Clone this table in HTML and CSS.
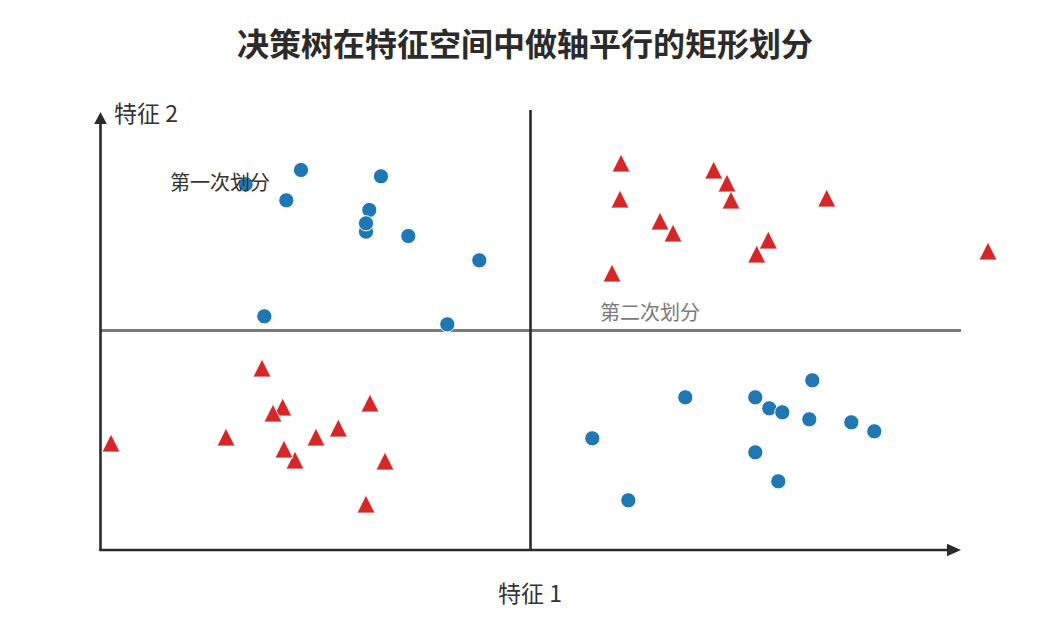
FILE: index.html
```html
<!DOCTYPE html>
<html lang="zh">
<head>
<meta charset="utf-8">
<title>决策树在特征空间中做轴平行的矩形划分</title>
<link rel="stylesheet" href="styles.css">
</head>
<body>
<div class="page">
  <h1 class="title">决策树在特征空间中做轴平行的矩形划分</h1>
  <svg class="chart" width="1050" height="640" viewBox="0 0 1050 640" xmlns="http://www.w3.org/2000/svg">
    <!-- split lines -->
    <line class="split-h" x1="100" y1="330.5" x2="961" y2="330.5"/>
    <line class="split-v" x1="530.5" y1="110" x2="530.5" y2="550"/>
    <!-- axes -->
    <line class="axis" x1="100.5" y1="551" x2="100.5" y2="120"/>
    <polygon class="axis-head" points="100.5,112 94.2,124 106.8,124"/>
    <line class="axis" x1="99.3" y1="550" x2="950" y2="550"/>
    <polygon class="axis-head" points="961,550 947,543.7 947,556.3"/>

    <!-- blue circles -->
    <g class="dots">
      <circle cx="301" cy="170" r="7.6"/>
      <circle cx="381" cy="176.3" r="7.6"/>
      <circle cx="245.7" cy="184.3" r="7.6"/>
      <circle cx="286.3" cy="200.3" r="7.6"/>
      <circle cx="366" cy="231.7" r="7.6"/>
      <circle cx="369.3" cy="210" r="7.6"/>
      <circle cx="366" cy="223.3" r="7.6"/>
      <circle cx="408.3" cy="236" r="7.6"/>
      <circle cx="479.3" cy="260.3" r="7.6"/>
      <circle cx="264.3" cy="316.3" r="7.6"/>
      <circle cx="447.3" cy="324.3" r="7.6"/>

      <circle cx="592.3" cy="438.3" r="7.6"/>
      <circle cx="628.3" cy="500.3" r="7.6"/>
      <circle cx="685.3" cy="397.3" r="7.6"/>
      <circle cx="755.3" cy="397.3" r="7.6"/>
      <circle cx="769.3" cy="408.3" r="7.6"/>
      <circle cx="782.3" cy="412.3" r="7.6"/>
      <circle cx="812.3" cy="380.3" r="7.6"/>
      <circle cx="809.3" cy="419.3" r="7.6"/>
      <circle cx="851.3" cy="422.3" r="7.6"/>
      <circle cx="874.3" cy="431.3" r="7.6"/>
      <circle cx="755.3" cy="452.3" r="7.6"/>
      <circle cx="778.3" cy="481.3" r="7.6"/>
    </g>

    <!-- red triangles -->
    <g class="tris">
      <polygon points="621,154 612,172 630,172"/>
      <polygon points="713.7,161 704.7,179 722.7,179"/>
      <polygon points="727,174 718,192 736,192"/>
      <polygon points="620,190 611,208 629,208"/>
      <polygon points="731,191 722,209 740,209"/>
      <polygon points="826.7,189 817.7,207 835.7,207"/>
      <polygon points="660,212 651,230 669,230"/>
      <polygon points="673,224 664,242 682,242"/>
      <polygon points="768.3,231 759.3,249 777.3,249"/>
      <polygon points="756.7,245 747.7,263 765.7,263"/>
      <polygon points="612,264 603,282 621,282"/>
      <polygon points="988,242 979,260 997,260"/>

      <polygon points="262,359 253,377 271,377"/>
      <polygon points="282.7,398 273.7,416 291.7,416"/>
      <polygon points="273,404 264,422 282,422"/>
      <polygon points="370,394 361,412 379,412"/>
      <polygon points="111,434 102,452 120,452"/>
      <polygon points="226,428 217,446 235,446"/>
      <polygon points="338.3,419 329.3,437 347.3,437"/>
      <polygon points="316,428 307,446 325,446"/>
      <polygon points="295,451 286,469 304,469"/>
      <polygon points="284,440 275,458 293,458"/>
      <polygon points="385,452 376,470 394,470"/>
      <polygon points="366,495 357,513 375,513"/>
    </g>

    <!-- labels -->
    <text class="axis-label" x="114" y="121.5">特征 2</text>
    <text class="axis-label label-x" x="530" y="601.5">特征 1</text>
    <text class="note note-dark" x="170" y="190">第一次划分</text>
    <text class="note note-gray" x="600" y="320">第二次划分</text>
  </svg>
</div>
</body>
</html>
```

FILE: styles.css
```css
html, body {
  margin: 0;
  padding: 0;
  background: #ffffff;
}

.page {
  position: relative;
  width: 1050px;
  height: 640px;
  overflow: hidden;
  font-family: "Noto Sans CJK SC", "Noto Sans", sans-serif;
}

.title {
  margin: 0;
  padding-top: 22px;
  line-height: 40px;
  font-size: 32px;
  font-weight: 700;
  color: #2b2b2b;
  text-align: center;
  letter-spacing: 0;
  position: relative;
  z-index: 1;
}

.chart {
  position: absolute;
  left: 0;
  top: 0;
}

.split-h {
  stroke: #7a7a7a;
  stroke-width: 3;
}

.split-v {
  stroke: #2b2b2b;
  stroke-width: 2.6;
}

.axis {
  stroke: #2b2b2b;
  stroke-width: 2.6;
}

.axis-head {
  fill: #2b2b2b;
}

.dots circle {
  fill: #1f77b4;
  stroke: #ffffff;
  stroke-width: 1;
}

.tris polygon {
  fill: #d62728;
  stroke: #ffffff;
  stroke-width: 0.8;
}

.axis-label {
  font-family: "Noto Sans CJK SC", "Noto Sans", sans-serif;
  font-size: 23px;
  fill: #333333;
}

.label-x {
  text-anchor: middle;
}

.note {
  font-family: "Noto Sans CJK SC", "Noto Sans", sans-serif;
  font-size: 20px;
}

.note-dark {
  fill: #333333;
}

.note-gray {
  fill: #7a7a7a;
}
```
